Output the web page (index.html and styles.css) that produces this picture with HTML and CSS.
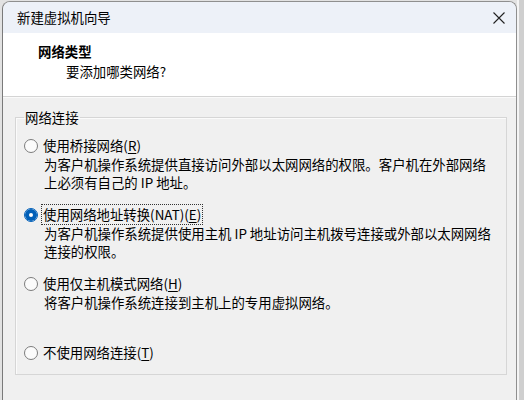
FILE: index.html
```html
<!DOCTYPE html>
<html lang="zh-CN">
<head>
<meta charset="utf-8">
<title>新建虚拟机向导</title>
<link rel="stylesheet" href="styles.css">
</head>
<body>
<div class="window">
  <div class="titlebar">
    <span class="title">新建虚拟机向导</span>
    <svg class="close" width="12" height="12" viewBox="0 0 12 12"><path d="M0.5 0.5 L11.5 11.5 M11.5 0.5 L0.5 11.5" stroke="#222" stroke-width="1.1" fill="none"/></svg>
  </div>
  <div class="header">
    <div class="h-title">网络类型</div>
    <div class="h-sub">要添加哪类网络?</div>
  </div>
  <div class="content">
    <fieldset class="group">
      <legend class="legend">网络连接</legend>
      <div class="opt">
        <div class="opt-label"><span class="radio"></span><span>使用桥接网络(<u>R</u>)</span></div>
        <div class="desc">为客户机操作系统提供直接访问外部以太网网络的权限。客户机在外部网络<br>上必须有自己的 IP 地址。</div>
      </div>
      <div class="opt">
        <div class="opt-label"><span class="radio checked"></span><span class="focus">使用网络地址转换(NAT)(<u>E</u>)</span></div>
        <div class="desc">为客户机操作系统提供使用主机 IP 地址访问主机拨号连接或外部以太网网络<br>连接的权限。</div>
      </div>
      <div class="opt">
        <div class="opt-label"><span class="radio"></span><span>使用仅主机模式网络(<u>H</u>)</span></div>
        <div class="desc">将客户机操作系统连接到主机上的专用虚拟网络。</div>
      </div>
      <div class="opt opt-last">
        <div class="opt-label"><span class="radio"></span><span>不使用网络连接(<u>T</u>)</span></div>
      </div>
    </fieldset>
  </div>
</div>
</body>
</html>
```
FILE: styles.css
```css
html, body {
  margin: 0;
  height: 400px;
  overflow: hidden;
}
body {
  background: linear-gradient(to right, #e2e2e2 0, #e2e2e2 517px, #f4f4f4 517px, #f4f4f4 519px, #cfcfcf 519px);
  font-family: "Microsoft YaHei UI", "Noto Sans CJK SC", sans-serif;
  font-size: 13.4px;
  color: #000;
}
.window {
  margin: 1px 0 0 2px;
  width: 515px;
  height: 399px;
  box-sizing: border-box;
  border: 1px solid #8f8f8f;
  border-bottom: 0;
  border-left-color: #7a7a7a;
  border-radius: 8px 8px 0 0;
  background: #f0f0f0;
  overflow: hidden;
}
.titlebar {
  height: 31px;
  background: #edf1f8;
  display: flex;
  align-items: center;
  justify-content: space-between;
  padding: 0 11px 0 14px;
}
.title {
  line-height: 19px;
}
.close {
  display: block;
}
.header {
  background: #ffffff;
  height: 64px;
  border-bottom: 1px solid #d4d4d4;
  padding: 8px 0 0 35px;
  box-sizing: border-box;
}
.h-title {
  font-weight: bold;
  line-height: 20px;
}
.h-sub {
  margin-left: 28px;
  line-height: 21px;
}
.content {
  padding: 10px 9px 0 12px;
  border-top: 1px solid #fafafa;
}
.group {
  margin: 0;
  padding: 9px 0 12px 8px;
  border: 1px solid #d6d6d6;
  box-shadow: inset 1px 1px 0 #fbfbfb;
  min-width: 0;
}
.legend {
  padding: 0 1px;
  line-height: 19px;
}
.opt {
  margin-bottom: 14px;
}
.opt-last {
  margin-top: 32px;
  margin-bottom: 0;
}
.opt-label {
  display: flex;
  align-items: center;
  gap: 5px;
  line-height: 19px;
}
.radio {
  width: 14px;
  height: 14px;
  box-sizing: border-box;
  border: 1px solid #7c7c7c;
  border-radius: 50%;
  background: #fbfbfb;
  flex: none;
}
.radio.checked {
  border-color: #005fb8;
  background: #ffffff;
  box-shadow: inset 0 0 0 4px #005fb8;
}
.focus {
  outline: 1px dotted #333;
  outline-offset: 0;
  margin-left: -1px;
  padding: 0 1px;
}
.desc {
  margin-left: 20px;
  line-height: 18px;
}
u {
  text-decoration-thickness: 1px;
  text-underline-offset: 2px;
}
```
